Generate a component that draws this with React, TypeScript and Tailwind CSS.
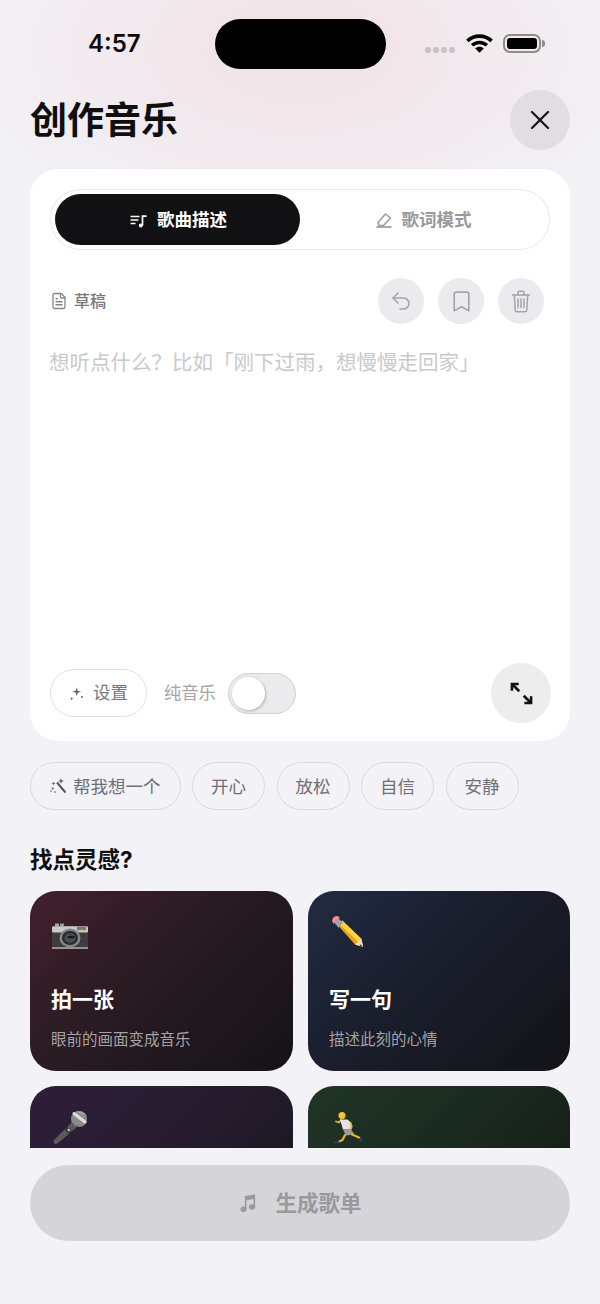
import { Bookmark, FileText, Undo2, X } from 'lucide-react';
import type { ReactNode } from 'react';

const FONT = "font-['Inter','Noto_Sans_CJK_SC',sans-serif]";

function Wifi() {
  return (
    <svg width="27" height="19" viewBox="1 3 26 18" fill="#000">
      <path d="M14 3.200c-5 0-9.400 1.900-12.800 5l2.300 2.500c2.800-2.500 6.400-4 10.500-4s7.700 1.500 10.500 4l2.300-2.500c-3.400-3.100-7.800-5-12.800-5z" />
      <path d="M14 9.300c-3.200 0-6.100 1.200-8.300 3.200l2.300 2.500c1.600-1.400 3.700-2.300 6-2.300s4.400.9 6 2.300l2.300-2.500c-2.200-2-5.100-3.200-8.300-3.200z" />
      <path d="M14 15.200c-1.600 0-3 .6-4.100 1.500l4.100 4.300 4.100-4.300c-1.100-.9-2.500-1.500-4.100-1.500z" />
    </svg>
  );
}

function Battery() {
  return (
    <div className="flex items-center gap-[1px]">
      <div className="w-[38px] h-[19px] rounded-[7px] border-2 border-[#8e8a8e] p-[2px]">
        <div className="w-full h-full rounded-[3px] bg-black" />
      </div>
      <div className="w-[3px] h-[7px] rounded-r-full bg-[#8e8a8e]" />
    </div>
  );
}

function ListNote() {
  return (
    <svg width="17" height="14" viewBox="0 0 17 14" fill="none" stroke="currentColor" strokeWidth="1.500">
      <path d="M0.500 2.500h9M0.500 6h8M0.500 9.500h5" />
      <path d="M12.500 11.500V2.200h4" strokeWidth="1.700" />
      <circle cx="10.800" cy="11.500" r="1.900" fill="currentColor" stroke="none" />
    </svg>
  );
}

function EraserPen() {
  return (
    <svg width="16" height="15" viewBox="0 0 16 15" fill="none" stroke="#9a9a9e" strokeWidth="1.500" strokeLinejoin="round">
      <path d="M2 9.500 9.500 1l5 4-7 7.500h-4.500z" />
      <path d="M0.500 14h15" strokeWidth="1.700" />
    </svg>
  );
}

function SparkDots() {
  return (
    <svg width="14" height="14" viewBox="0 0 14 14" fill="#666">
      <path d="M7.700 0.200 8.700 3.700l3.500 1-3.500 1-1 3.500-1-3.500-3.500-1 3.500-1z" />
      <path d="M2.700 10 3.200 11.200 4.400 11.700 3.200 12.200 2.700 13.400 2.200 12.200 1 11.700 2.200 11.200z" />
      <circle cx="13" cy="10" r="1" />
    </svg>
  );
}

function Wand() {
  return (
    <svg width="16" height="16" viewBox="0 0 16 16" fill="#555">
      <path d="M7 4.500 15.500 14.500" stroke="#555" strokeWidth="2" fill="none" />
      <path d="M11 0 11.700 2.300 14 3 11.700 3.700 11 6 10.300 3.700 8 3l2.300-.7z" />
      <path d="M3.500 3.500 4 5 5.500 5.500 4 6 3.500 7.500 3 6 1.500 5.500 3 5z" />
      <circle cx="2.700" cy="10.500" r="1" />
      <circle cx="1" cy="13" r=".8" />
      <circle cx="5" cy="14" r=".8" />
    </svg>
  );
}

function TrashIcon() {
  return (
    <svg width="20" height="23" viewBox="0 0 20 23" fill="none" stroke="#a5a5a9" strokeWidth="1.500" strokeLinecap="round" strokeLinejoin="round">
      <path d="M1.500 5h17" />
      <path d="M7 5V2.500A1.200 1.200 0 0 1 8.200 1.300h3.600A1.200 1.200 0 0 1 13 2.500V5" />
      <path d="M3.300 5l.9 14.800a2 2 0 0 0 2 1.900h7.600a2 2 0 0 0 2-1.900L16.700 5" />
      <path d="M7 9v8.500M10 9v8.500M13 9v8.500" />
    </svg>
  );
}

function ExpandIcon() {
  return (
    <svg width="27" height="27" viewBox="0 0 24 24" fill="none" stroke="#111" strokeWidth="2.300">
      <path d="M3.500 9.500v-6h6" />
      <path d="M3.800 3.800 10 10" />
      <path d="M20.500 14.500v6h-6" />
      <path d="M20.200 20.200 14 14" />
    </svg>
  );
}

function BeamNote() {
  return (
    <svg width="16" height="18" viewBox="0 0 18 20" fill="#99999e">
      <path d="M5.500 2 17 0.500v14h-1.800V5.500L7.300 6.800V17H5.500z" />
      <ellipse cx="4" cy="17" rx="3.500" ry="3" />
      <ellipse cx="13.500" cy="14.500" rx="3.500" ry="3" />
    </svg>
  );
}

function CameraEmoji() {
  return (
    <svg width="36" height="36" viewBox="0 0 36 36" className="ml-[1px]">
      <g transform="translate(0 8.500) scale(1 0.9)">
        <rect x="3" y="0" width="4" height="3" rx="0.500" fill="#a9a9a9" />
        <rect x="8" y="0" width="4" height="3" rx="0.500" fill="#9c9c9c" />
        <rect x="0" y="3" width="36" height="25" rx="2" fill="#3d3d3e" />
        <rect x="0" y="3" width="36" height="7" rx="1.500" fill="#c9c9c7" />
        <rect x="25" y="3.500" width="9" height="4" fill="#77787a" />
        <circle cx="18" cy="16" r="10.500" fill="#85878a" />
        <circle cx="18" cy="16" r="8" fill="#2a2b2d" />
        <circle cx="18" cy="16" r="5.500" fill="#4a4c50" />
        <ellipse cx="19" cy="15" rx="3.500" ry="1.500" fill="#1a1a1c" />
        <circle cx="30" cy="8" r="1.200" fill="#e5c83d" />
        <rect x="0" y="26.500" width="36" height="1.500" fill="#bdbdbb" />
      </g>
    </svg>
  );
}

function PencilEmoji() {
  return (
    <svg width="36" height="36" viewBox="-2.500 -1 39.500 39.500">
      <path d="M7 10 12 5 33 25l2 9-9-2.500z" fill="#e9a416" />
      <path d="M12 5 33 25l-3.500 3.500L8.500 8.500z" fill="#fbd24a" />
      <path d="M26 31.500 30.500 27l2.500-2 2 9z" fill="#f3dcb0" />
      <path d="m32 31 3 3-3.800-1z" fill="#3a3a3a" />
      <path d="M3.500 7.500 8 3l5 4.500L8 13z" fill="#9ca3a8" />
      <path d="M1 5c0-2.500 2.500-5 5-5 1.500 0 2.500 1 3.500 2L2.800 8.500C1.800 7.500 1 6.500 1 5z" fill="#ef8d91" />
    </svg>
  );
}

function MicEmoji() {
  return (
    <svg width="36" height="36" viewBox="0 0 36 36" className="ml-[1px]">
      <path d="M20 12 25 17 5.500 33.500Q3 34.500 1.800 33Q.8 31.500 2.500 29.500z" fill="#5a5a5c" />
      <path d="m15 16.500 5 5-3 2.500-4.700-5z" fill="#303032" />
      <path d="m16.500 18.500 2 2-1.500 1.300-2-2z" fill="#c4c4c6" />
      <circle cx="27" cy="9" r="8" fill="#8b8b8d" />
      <path d="M21 14.500 20 12l4.500 5 2.500-.2z" fill="#4a4a4c" />
      <path d="M22 3.500 33 12" stroke="#dedede" strokeWidth="3" strokeLinecap="round" />
      <path d="M24 1.800A8 8 0 0 1 34.500 6z" fill="#a5a5a7" />
    </svg>
  );
}

function RunnerEmoji() {
  return (
    <svg width="30" height="36" viewBox="0 -2 30 36" className="ml-[4px]" fill="none" strokeLinecap="round" strokeLinejoin="round">
      <circle cx="9" cy="3.500" r="3.500" fill="#f7c52c" />
      <path d="M8 8 6 10.500 3 9.500" stroke="#f2b81f" strokeWidth="1.800" />
      <path d="M7 7.500h7.500l4 3.500-1 6.500H10z" fill="#e2e2e2" />
      <path d="m17.500 11 1.300 3.500-1.300 3" stroke="#f2b81f" strokeWidth="1.800" />
      <path d="M10 17.500h8l3.500 5-8.500 1z" fill="#9a9a9a" />
      <path d="M12 23 9.500 28 6 29.500" stroke="#f0af1c" strokeWidth="2.200" />
      <path d="m19 22.500 7 3" stroke="#f0af1c" strokeWidth="2.200" />
      <path d="m0 30 6-1.500.5 1.800L1 31.500z" fill="#2c3f8f" />
      <path d="m27.500 24.500 2 .8-1 5-1.500-1.300z" fill="#2c3f8f" />
    </svg>
  );
}

function RoundAction({ children }: { children: ReactNode }) {
  return <div className="w-[46px] h-[46px] rounded-full bg-[#ebebef] flex items-center justify-center">{children}</div>;
}

function Chip({ label, icon }: { label: string; icon?: ReactNode }) {
  return (
    <div className={`h-[48px] rounded-full border border-[#d9d9de] flex items-center gap-[7px] text-[17.500px] text-[#6f6f74] ${icon ? 'px-[19px]' : 'px-[18px]'}`}>
      {icon}
      <span className="pt-[2px]">{label}</span>
    </div>
  );
}

function IdeaCard({ tint, icon, title, desc }: { tint: string; icon: ReactNode; title?: string; desc?: string }) {
  return (
    <div className={`h-[180px] rounded-[26px] px-[21px] pt-[24px] flex flex-col ${tint}`}>
      <div className="h-[36px] flex items-center">{icon}</div>
      {title && <div className="mt-[35px] text-[21px] leading-[28px] font-semibold text-white">{title}</div>}
      {desc && <div className="mt-[15px] text-[15.500px] leading-[22px] text-[#a5a2a6]">{desc}</div>}
    </div>
  );
}

export default function App() {
  return (
    <div
      className={`${FONT} w-[600px] h-[1304px] overflow-hidden flex flex-col bg-[#f2f2f7] bg-[radial-gradient(ellipse_360px_200px_at_300px_50px,#f1e5e9_25%,#f2f2f7_100%)]`}
    >
      <div className="h-[1148px] overflow-hidden shrink-0">
        <div className="h-[90px] pt-[19px] pl-[88px] flex items-start">
          <div className="w-[127px] pt-[9px] text-[24px] leading-[32px] font-semibold text-[#0b0b0b]">4:57</div>
          <div className="w-[171px] h-[50px] rounded-full bg-black" />
          <div className="ml-[39px] flex items-start pt-[15px]">
            <div className="flex gap-[2px] mt-[13px]">
              <span className="w-[6px] h-[6px] rounded-full bg-[#c6c2c6]" />
              <span className="w-[6px] h-[6px] rounded-full bg-[#c6c2c6]" />
              <span className="w-[6px] h-[6px] rounded-full bg-[#c6c2c6]" />
              <span className="w-[6px] h-[6px] rounded-full bg-[#c6c2c6]" />
            </div>
            <div className="ml-[11px]">
              <Wifi />
            </div>
            <div className="ml-[10px]">
              <Battery />
            </div>
          </div>
        </div>

        <div className="h-[79px] px-[30px] flex items-start justify-between">
          <div className="text-[37px] leading-[62px] font-bold text-[#0f0f10]">创作音乐</div>
          <div className="w-[60px] h-[60px] rounded-full bg-[#e1dde1] flex items-center justify-center">
            <X size={32} strokeWidth={1.600} color="#111" />
          </div>
        </div>

        <div className="mx-[30px] h-[572px] rounded-[28px] bg-white pt-[20px] px-[20px] pb-[18px] flex flex-col">
          <div className="h-[61px] rounded-full border border-[#e8e8eb] p-[4px] flex">
            <div className="w-[245px] pt-[2px] pl-[2px] rounded-full bg-[#111113] flex items-center justify-center gap-[10px] text-white text-[17.500px] font-semibold">
              <ListNote />
              歌曲描述
            </div>
            <div className="flex-1 pt-[2px] pl-[2px] flex items-center justify-center gap-[10px] text-[#9a9a9e] text-[17.500px] font-semibold">
              <EraserPen />
              歌词模式
            </div>
          </div>

          <div className="mt-[28px] h-[46px] pr-[6px] flex items-center justify-between">
            <div className="flex items-center gap-[6px] text-[16px] text-[#77777c] font-medium">
              <FileText size={18} strokeWidth={1.700} color="#858589" />
              草稿
            </div>
            <div className="flex gap-[14px]">
              <RoundAction>
                <Undo2 size={24} strokeWidth={1.600} color="#a5a5a9" />
              </RoundAction>
              <RoundAction>
                <Bookmark size={25} strokeWidth={1.600} color="#a5a5a9" />
              </RoundAction>
              <RoundAction>
                <TrashIcon />
              </RoundAction>
            </div>
          </div>

          <div className="mt-[24px] -ml-[1px] text-[20.500px] leading-[30px] text-[#c9c9cc]">想听点什么？比如「刚下过雨，想慢慢走回家」</div>

          <div className="mt-auto flex items-center">
            <div className="w-[97px] h-[48px] pt-[1px] rounded-full border border-[#e1e1e4] flex items-center justify-center gap-[10px] text-[17.500px] text-[#77777c]">
              <SparkDots />
              设置
            </div>
            <div className="ml-[17px] text-[17.300px] text-[#a5a5a9]">纯音乐</div>
            <div className="ml-[12px] w-[68px] h-[41px] rounded-full bg-[#ebebed] border border-[#d0d0d2] p-[3px]">
              <div className="w-[33px] h-[33px] rounded-full bg-white shadow-[1px_1px_3px_rgba(0,0,0,0.25)]" />
            </div>
            <div className="ml-auto mr-[-1px] w-[60px] h-[60px] rounded-full bg-[#ededee] flex items-center justify-center">
              <ExpandIcon />
            </div>
          </div>
        </div>

        <div className="mt-[21px] px-[30px] flex gap-[11.500px]">
          <Chip label="帮我想一个" icon={<Wand />} />
          <Chip label="开心" />
          <Chip label="放松" />
          <Chip label="自信" />
          <Chip label="安静" />
        </div>

        <div className="mt-[34px] px-[30px] text-[22.500px] leading-[32px] font-bold text-[#0f0f10]">找点灵感?</div>

        <div className="mt-[15px] px-[30px] grid grid-cols-[263px_262px] gap-x-[15px] gap-y-[15px]">
          <IdeaCard
            tint="bg-[linear-gradient(135deg,#42202d_0%,#291b23_45%,#141318_100%)]"
            icon={<CameraEmoji />}
            title="拍一张"
            desc="眼前的画面变成音乐"
          />
          <IdeaCard
            tint="bg-[linear-gradient(135deg,#222b42_0%,#1a1e2c_45%,#131317_100%)]"
            icon={<PencilEmoji />}
            title="写一句"
            desc="描述此刻的心情"
          />
          <IdeaCard tint="bg-[linear-gradient(135deg,#2e1f3a_0%,#261c2e_45%,#151418_100%)]" icon={<MicEmoji />} />
          <IdeaCard tint="bg-[linear-gradient(135deg,#1f3426_0%,#1b2a20_45%,#131512_100%)]" icon={<RunnerEmoji />} />
        </div>
      </div>

      <div className="mt-[17px] mx-[30px] h-[76px] pl-[2px] rounded-[38px] bg-[#d4d4d9] flex items-center justify-center gap-[19px] text-[21.500px] font-semibold text-[#99999e]">
        <BeamNote />
        生成歌单
      </div>
    </div>
  );
}
